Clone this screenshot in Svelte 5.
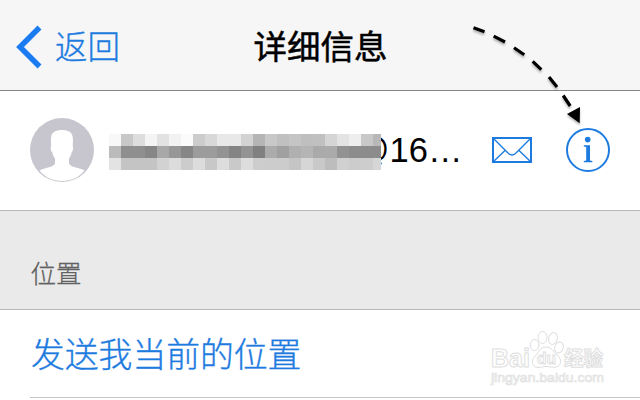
<script lang="ts">
  const mosaic: string[][] = [
    "f8 c8 dd f4 e2 f2 fb cc d8 e8 e8 d3 b5 c8 c0 c5 bf c0 d5 e3 ee c8 b8",
    "bb 8f 8f 86 a8 97 86 9c 9c 93 84 93 80 ab a0 b0 b5 aa ab 92 8c 8c 8c",
    "e3 c4 c4 c4 d2 dc cc dc c8 dd c9 dd cd cc cc c5 d6 c9 bd d0 cc cd d6",
  ].map((row) => row.split(" "));
</script>

<div class="screen">
  <header class="navbar">
    <button class="back">
      <svg width="26" height="44" viewBox="0 0 26 44">
        <path d="M23.5 2.5 4 22l19.5 19.5" />
      </svg>
      <span>返回</span>
    </button>
    <h1>详细信息</h1>
  </header>

  <section class="contact">
    <svg class="avatar" width="64" height="64" viewBox="0 0 64 64">
      <circle cx="32" cy="32" r="32" fill="#c7c6ce" />
      <path
        d="M9.500 52.500C14 50 25 49 25 45V40.500C23.500 38.500 22.500 36.500 22.200 34C20.800 33.500 20.200 29 21.200 28C20.800 24 20.600 20 21.500 17C23 13.500 27 12 32 12C37 12 41 13.500 42.200 17C43.200 20 43 24 42.700 28C43.600 29 43 33.500 41.700 34C41.400 36.500 40.500 38.500 39 40.500V45C39 49 50 50 54.500 52.500C49 59.500 41 63 32 63C23 63 15 59.500 9.500 52.500Z"
        fill="#fff"
      />
    </svg>
    <div class="address">
      <div class="mosaic">
        {#each mosaic as row}
          {#each row as shade}
            <i style="background: #{shade}{shade}{shade}"></i>
          {/each}
        {/each}
      </div>
      <span class="tail">@16…</span>
    </div>
    <button class="mail" aria-label="mail">
      <svg width="40" height="26" viewBox="0 0 40 26">
        <rect x="1" y="1" width="38" height="24" stroke-width="2" />
        <path d="M1.500 1.500 16.500 16.500Q20 19.500 23.500 16.500L38.500 1.500M1.500 24.500 13 13.500M38.500 24.500 27 13.500" stroke-width="1.400" />
      </svg>
    </button>
    <button class="info" aria-label="info">
      <svg width="44" height="44" viewBox="0 0 44 44">
        <circle cx="22" cy="22" r="21" stroke-width="2" />
        <circle class="fill" cx="21.700" cy="11.600" r="2.800" />
        <path class="fill" d="M17.800 17.300H24V32.500L26.300 33V34.300H17.800V33L20.200 32.500V19L17.800 18.500Z" />
      </svg>
    </button>
  </section>

  <h2>位置</h2>

  <section class="location">
    <a href="#location">发送我当前的位置</a>
  </section>

  <svg class="arrow" width="120" height="110" viewBox="0 0 120 110">
    <path
      d="M3.500 6.700 14.500 10.700M23.700 15.200 35 21M44 26.800 54.300 33.800M62.700 40.300 71.300 48.700M79 56 87 66M93.200 74.500 100.200 85"
      stroke="#000"
      stroke-width="3.200"
    />
    <path d="M97 93 110 86 109.700 102.300Z" />
  </svg>

  <svg class="watermark" width="124" height="62" viewBox="0 0 124 62">
    <g class="outline">
      <text x="1" y="38" font-size="26" textLength="39" lengthAdjust="spacingAndGlyphs">Bai</text>
      <ellipse cx="44.500" cy="16" rx="4.300" ry="5.500" />
      <ellipse cx="52.500" cy="8.500" rx="4.500" ry="6" />
      <ellipse cx="63" cy="9.500" rx="4.300" ry="6" transform="rotate(15 63 9.500)" />
      <ellipse cx="69" cy="18.500" rx="4.300" ry="5.500" transform="rotate(18 69 18.500)" />
      <path d="M56 18C50 18 49 23 46 26C41 30 41 38 48 38.500C52 38.500 53 37.500 56 37.500C60 37.500 63 39 66 38C72 37 72 29 67 26C63 23 62 18 56 18Z" />
      <text x="47" y="35" font-size="17" textLength="19" lengthAdjust="spacingAndGlyphs">du</text>
      <text class="cjk" x="74" y="36.500" font-size="20" textLength="39" lengthAdjust="spacingAndGlyphs">经验</text>
      <text class="url" x="1" y="53" font-size="13" textLength="113" lengthAdjust="spacingAndGlyphs">jingyan.baidu.com</text>
    </g>
  </svg>
</div>

<style>
  :global(body) {
    margin: 0;
    background: #fff;
  }

  .screen {
    position: relative;
    width: 640px;
    height: 400px;
    overflow: hidden;
    background: #fff;
    font-family: "Liberation Sans", "Noto Sans CJK SC", sans-serif;
  }

  button {
    display: flex;
    margin: 0;
    padding: 0;
    border: 0;
    background: none;
    color: #1d7be0;
    font: inherit;
  }

  .navbar {
    display: grid;
    grid-template-columns: 1fr auto 1fr;
    align-items: center;
    box-sizing: border-box;
    height: 91px;
    padding: 4px 0 0 1px;
    border-bottom: 1px solid #848486;
    background: #f6f6f7;
  }

  .back {
    align-items: center;
    gap: 13px;
    padding-left: 15px;
    font-size: 32.5px;
    font-weight: 300;
    line-height: 44px;
    -webkit-text-stroke: 0.35px;
  }

  .back span {
    padding-top: 2px;
  }

  .back svg {
    fill: none;
    stroke: #1a7cf0;
    stroke-width: 5.5;
  }

  h1 {
    margin: 0;
    padding-top: 2px;
    color: #000;
    font-size: 33.5px;
    font-weight: 400;
    line-height: 44px;
    -webkit-text-stroke: 0.5px;
  }

  .contact {
    display: flex;
    align-items: center;
    box-sizing: border-box;
    height: 120px;
    padding: 0 30px 2px;
    border-bottom: 1px solid #b8b8bc;
  }

  .address {
    display: flex;
    flex: 1;
    align-items: center;
    margin-left: 15px;
  }

  .mosaic {
    z-index: 1;
    display: grid;
    flex: none;
    grid-template-columns: repeat(22, 12px) 8px;
    grid-auto-rows: 12px;
    margin-top: 4px;
  }

  .tail {
    margin-left: -26.5px;
    color: #000;
    font-size: 34.5px;
    line-height: 40px;
  }

  .mail {
    margin-right: 34px;
  }

  .mail svg,
  .info svg {
    fill: none;
    stroke: #1d7be0;
  }

  .info .fill {
    fill: #1d7be0;
    stroke: none;
  }

  h2 {
    display: flex;
    align-items: flex-end;
    box-sizing: border-box;
    height: 99px;
    margin: 0;
    padding: 0 30.5px 19px;
    border-bottom: 1px solid #b8b8bc;
    background: #eaeaea;
    color: #626262;
    font-size: 25.5px;
    font-weight: 300;
    -webkit-text-stroke: 0.3px;
  }

  .location {
    box-sizing: border-box;
    height: 88px;
    margin-left: 30px;
    padding-left: 1px;
    border-bottom: 1px solid #c5c5c8;
    line-height: 91px;
  }

  .location a {
    color: #1d7be0;
    font-size: 33.8px;
    font-weight: 300;
    text-decoration: none;
    -webkit-text-stroke: 0.35px;
  }

  .arrow {
    position: absolute;
    top: 21px;
    left: 470px;
    filter: drop-shadow(0 2px 1px rgba(0, 0, 0, 0.3));
  }

  .watermark {
    position: absolute;
    top: 329px;
    left: 490px;
  }

  .outline {
    fill: #fff;
    stroke: #dedede;
    stroke-width: 1;
    font-family: "Liberation Sans", sans-serif;
    font-weight: bold;
  }

  .cjk {
    font-family: "Noto Sans CJK SC", sans-serif;
  }

  .url {
    font-weight: normal;
    stroke-width: 0.7;
  }
</style>
